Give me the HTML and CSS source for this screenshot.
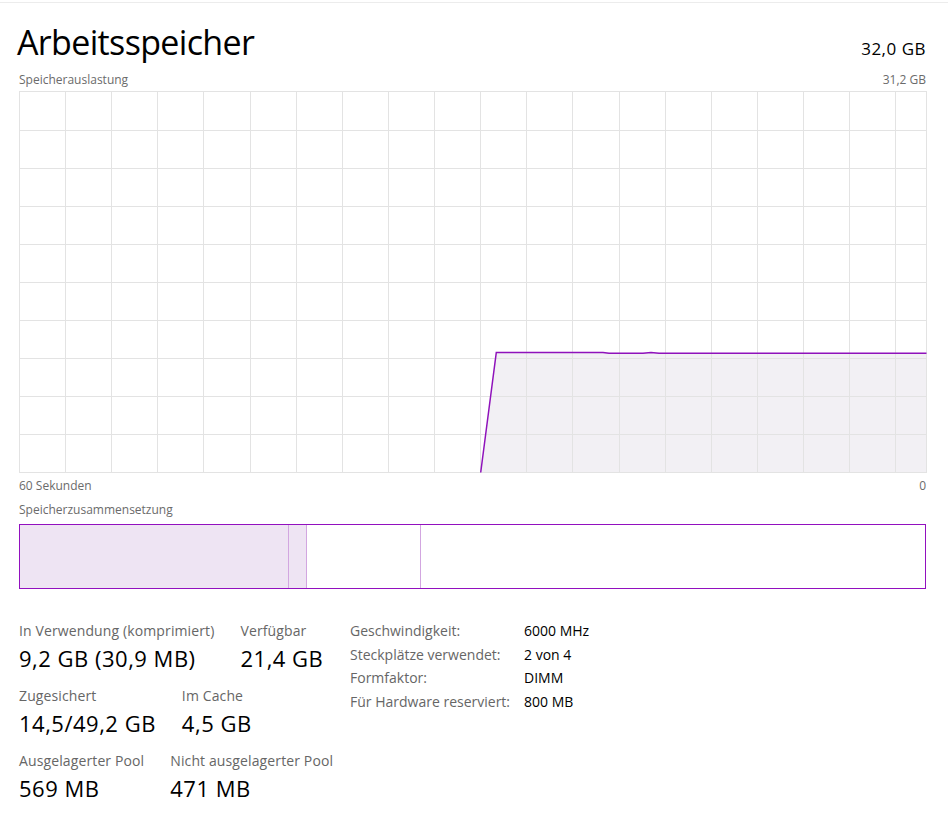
FILE: index.html
```html
<!DOCTYPE html>
<html lang="de">
<head>
<meta charset="utf-8">
<title>Arbeitsspeicher</title>
<link rel="stylesheet" href="styles.css">
</head>
<body>
<div class="page">
  <header class="head">
    <h1 class="title">Arbeitsspeicher</h1>
    <span class="total">32,0 GB</span>
  </header>
  <div class="sub"><span>Speicherauslastung</span><span>31,2 GB</span></div>
  <div class="graph">
    <svg width="908" height="382" viewBox="0 0 908 382" xmlns="http://www.w3.org/2000/svg">
      <polygon class="area" points="461.7,381.5 477.3,261.5 584,261.5 590,262.2 624,262.2 632,261.6 640,262.2 907.5,262.3 907.5,381.5"/>
      <g class="grid">
        <path d="M46.5 0V382M92.5 0V382M138.5 0V382M184.5 0V382M231.5 0V382M277.5 0V382M323.5 0V382M369.5 0V382M415.5 0V382M461.5 0V382M507.5 0V382M553.5 0V382M600.5 0V382M646.5 0V382M692.5 0V382M738.5 0V382M784.5 0V382M830.5 0V382M876.5 0V382"/>
        <path d="M0 39.5H908M0 77.5H908M0 115.5H908M0 153.5H908M0 191.5H908M0 229.5H908M0 267.5H908M0 305.5H908M0 343.5H908"/>
        <rect x="0.5" y="0.5" width="907" height="381"/>
      </g>
      <polyline class="line" points="461.7,381.5 477.3,261.5 584,261.5 590,262.2 624,262.2 632,261.6 640,262.2 907.5,262.3"/>
    </svg>
  </div>
  <div class="axis"><span>60 Sekunden</span><span>0</span></div>
  <div class="comp-label">Speicherzusammensetzung</div>
  <div class="comp">
    <div class="seg seg-used" style="width:269px"></div>
    <div class="seg seg-mod" style="width:18px"></div>
    <div class="seg seg-standby" style="width:114px"></div>
    <div class="seg seg-free"></div>
  </div>
  <section class="stats">
    <div class="left">
      <div class="row">
        <div class="item"><div class="label">In Verwendung (komprimiert)</div><div class="value">9,2 GB (30,9 MB)</div></div>
        <div class="item"><div class="label">Verfügbar</div><div class="value">21,4 GB</div></div>
      </div>
      <div class="row">
        <div class="item"><div class="label">Zugesichert</div><div class="value">14,5/49,2 GB</div></div>
        <div class="item"><div class="label">Im Cache</div><div class="value">4,5 GB</div></div>
      </div>
      <div class="row">
        <div class="item"><div class="label">Ausgelagerter Pool</div><div class="value">569 MB</div></div>
        <div class="item"><div class="label">Nicht ausgelagerter Pool</div><div class="value">471 MB</div></div>
      </div>
    </div>
    <dl class="props">
      <dt>Geschwindigkeit:</dt><dd>6000 MHz</dd>
      <dt>Steckplätze verwendet:</dt><dd>2 von 4</dd>
      <dt>Formfaktor:</dt><dd>DIMM</dd>
      <dt>Für Hardware reserviert:</dt><dd>800 MB</dd>
    </dl>
  </section>
</div>
</body>
</html>
```
FILE: styles.css
```css
html, body {
  margin: 0;
  padding: 0;
  background: #ffffff;
}
body {
  font-family: "Open Sans", "Noto Sans", sans-serif;
  color: #000;
}
.page {
  margin-top: 2px;
  border-top: 1px solid #ececec;
  padding: 0 22px 0 19px;
  width: 907px;
}
.head {
  display: flex;
  justify-content: space-between;
  align-items: baseline;
  margin-top: 19px;
}
.title {
  margin: 0 0 0 -2px;
  font-size: 34px;
  font-weight: 400;
  line-height: 40px;
  letter-spacing: -0.65px;
}
.total {
  font-size: 17px;
  line-height: 20px;
  letter-spacing: 0.5px;
}
.sub, .axis {
  display: flex;
  justify-content: space-between;
  font-size: 12px;
  line-height: 16px;
  color: #6b6b6b;
}
.sub {
  margin-top: 10px;
}
.graph {
  margin-top: 3px;
  height: 382px;
}
.graph svg {
  display: block;
}
.grid path, .grid rect {
  fill: none;
  stroke: #e3e3e3;
  stroke-width: 1;
  shape-rendering: crispEdges;
}
.area {
  fill: #f2f0f4;
}
.line {
  fill: none;
  stroke: #8f12bb;
  stroke-width: 1.5;
}
.axis {
  margin-top: 5px;
}
.comp-label {
  margin-top: 8px;
  font-size: 12px;
  line-height: 16px;
  color: #6b6b6b;
}
.comp {
  margin-top: 6px;
  height: 63px;
  border: 1px solid #9210bf;
  display: flex;
}
.seg {
  height: 100%;
  box-sizing: border-box;
  flex: none;
}
.seg-used, .seg-mod {
  background: #eee4f3;
  border-right: 1px solid #d2a6e0;
}
.seg-standby {
  border-right: 1px solid #d2a6e0;
}
.seg-free {
  flex: 1;
}
.stats {
  display: flex;
  align-items: flex-start;
  margin-top: 32px;
}
.left {
  width: 331px;
  flex: none;
  display: flex;
  flex-direction: column;
  gap: 13px;
}
.row {
  display: flex;
  gap: 26px;
}
.label {
  font-size: 14px;
  line-height: 19px;
  color: #666666;
  letter-spacing: 0.12px;
}
.value {
  margin-top: 3px;
  font-size: 22px;
  line-height: 30px;
  letter-spacing: 0.5px;
}
.props {
  margin: -2px 0 0;
  display: grid;
  grid-template-columns: 174px auto;
  font-size: 14px;
  line-height: 23.7px;
}
.props dt {
  color: #666666;
}
.props dd {
  margin: 0;
  color: #000;
}
```
